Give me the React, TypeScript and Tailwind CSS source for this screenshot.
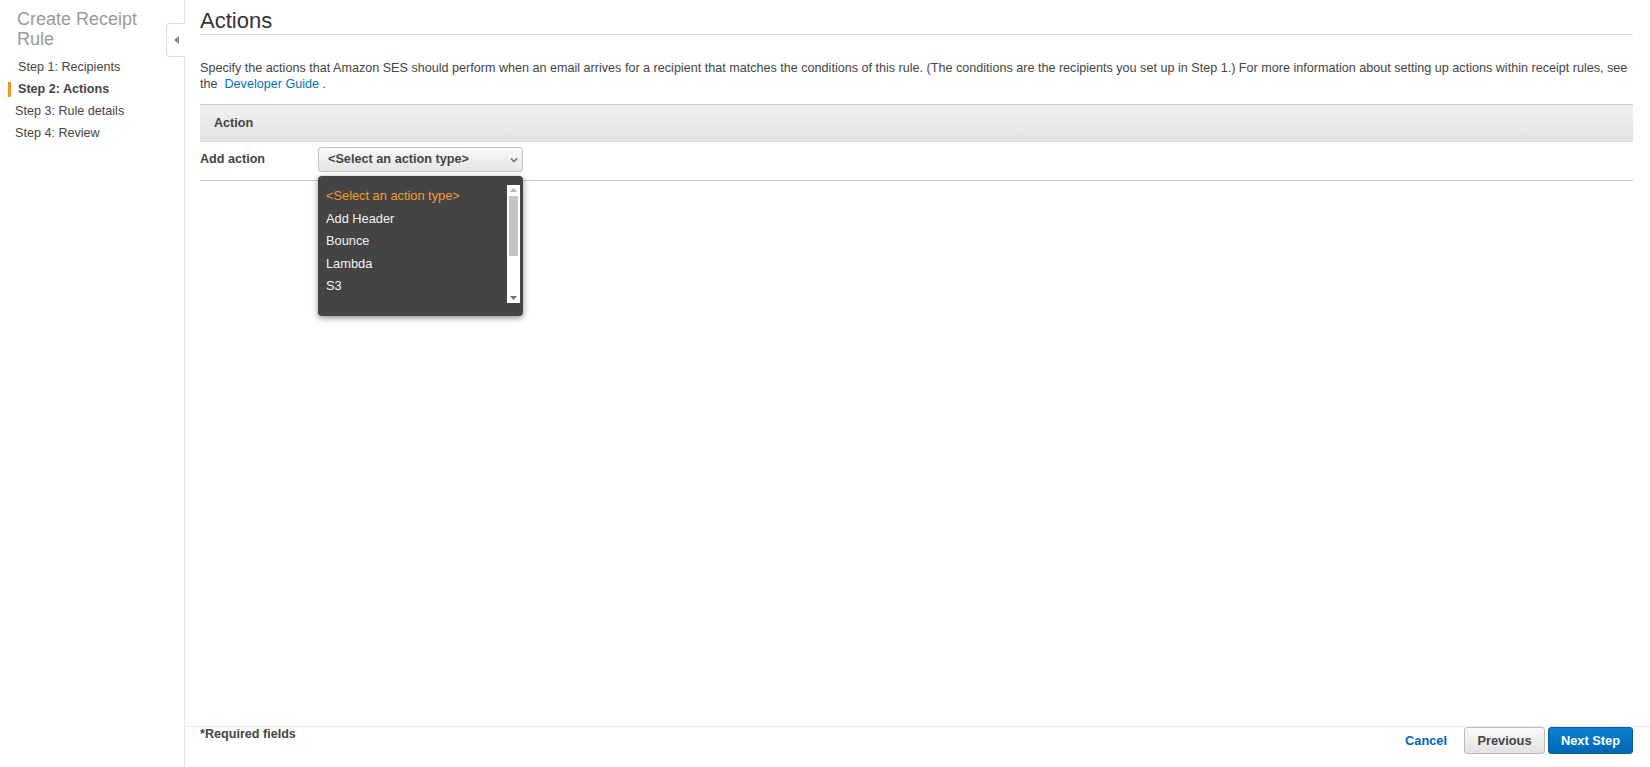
import React from "react";

const steps = [
  { label: "Step 1: Recipients", pad: "pl-[18px]" },
  { label: "Step 2: Actions", pad: "pl-[18px]", active: true },
  { label: "Step 3: Rule details", pad: "pl-[15px]" },
  { label: "Step 4: Review", pad: "pl-[15px]" },
];

const options = ["<Select an action type>", "Add Header", "Bounce", "Lambda", "S3"];

function Sidebar() {
  return (
    <div className="relative w-[185px] shrink-0 border-r border-[#e8e8e8] bg-white">
      <div className="pl-[17px] pt-[9px] text-[18px] leading-[20px] text-[#9a9a9a]">
        Create Receipt
        <br />
        Rule
      </div>
      <ul className="mt-[7px] text-[12.6px] text-[#444]">
        {steps.map((s) => (
          <li key={s.label} className={`relative h-[22px] leading-[22px] ${s.pad} ${s.active ? "font-bold" : ""}`}>
            {s.active && <span className="absolute left-[8px] top-[4px] h-[15px] w-[3px] bg-[#f7931e]" />}
            {s.label}
          </li>
        ))}
      </ul>
      {/* collapse tab sitting over the border */}
      <button className="absolute right-[-1px] top-[23px] flex h-[34px] w-[19px] items-center justify-center rounded-l-[4px] border border-r-0 border-[#dcdcdc] bg-white">
        <svg width="5" height="8" viewBox="0 0 5 8">
          <path d="M5 0 L0 4 L5 8 Z" fill="#888" />
        </svg>
      </button>
    </div>
  );
}

function ActionDropdown() {
  return (
    <div className="absolute left-0 top-[29px] z-10 flex h-[140px] w-[205px] rounded-[4px] bg-[#444] shadow-[0_2px_6px_rgba(0,0,0,0.45)]">
      <ul className="flex-1 pl-[8px] pt-[9px] text-[12.8px] font-normal">
        {options.map((o, i) => (
          <li key={o} className={`leading-[22.5px] ${i === 0 ? "text-[#f39a2e]" : "text-[#f2f2f2]"}`}>
            {o}
          </li>
        ))}
      </ul>
      <div className="mb-[13px] mr-[3px] mt-[9px] flex w-[13px] flex-col items-center bg-white">
        <svg width="7" height="6" viewBox="0 0 7 6" className="mt-[2px]">
          <path d="M0 5 L3.5 1 L7 5 Z" fill="#b5b5b5" />
        </svg>
        <div className="mt-[3px] h-[60px] w-[9px] bg-[#c4c4c4]" />
        <div className="flex-1" />
        <svg width="7" height="6" viewBox="0 0 7 6" className="mb-[2px]">
          <path d="M0 1 L3.5 5 L7 1 Z" fill="#6f6f6f" />
        </svg>
      </div>
    </div>
  );
}

export default function App() {
  return (
    <div className="flex h-[767px] w-full bg-white font-['Liberation_Sans',Arial,sans-serif] text-[#444]">
      <Sidebar />
      <div className="flex min-w-0 flex-1 flex-col pl-[15px] pr-[17px]">
        <h1 className="mt-[8px] border-b border-[#dddddd] text-[22px] leading-[26px] text-[#333]">Actions</h1>
        <p className="mt-[25px] text-[12.6px] leading-[16px] text-[#444]">
          Specify the actions that Amazon SES should perform when an email arrives for a recipient that matches the conditions of this rule.
          (The conditions are the recipients you set up in Step 1.) For more information about setting up actions within receipt rules, see
          the <a className="text-[#0073bb]">&nbsp;Developer Guide</a> .
        </p>

        <div className="mt-[12px] flex h-[38px] items-center border-t border-b border-t-[#c8c8c8] border-b-[#dedede] bg-gradient-to-b from-[#f1f1f1] to-[#e3e3e3] pl-[14px] text-[12.6px] font-bold text-[#444]">
          Action
        </div>

        <div className="flex items-center border-b border-[#c9c9c9] pb-[8px] pt-[5px]">
          <span className="w-[118px] text-[12.6px] font-bold text-[#444]">Add action</span>
          <div className="relative">
            <div className="flex h-[25px] w-[205px] items-center justify-between rounded-[3px] border border-[#c3c3c3] bg-gradient-to-b from-[#fafafa] to-[#e4e4e4] pl-[9px] pr-[4px] text-[12.7px] font-bold text-[#444]">
              <span>&lt;Select an action type&gt;</span>
              <svg width="8" height="6" viewBox="0 0 8 6">
                <path d="M1 1.5 L4 4.5 L7 1.5" fill="none" stroke="#777" strokeWidth="1.6" />
              </svg>
            </div>
            <ActionDropdown />
          </div>
        </div>

        <div className="flex-1" />

        <div className="-ml-[15px] -mr-[17px] flex items-start border-t border-[#ececec] pb-[13px] pl-[15px] pr-[17px]">
          <span className="mt-[-1px] text-[12.6px] font-bold leading-[16px] text-[#444]">*Required fields</span>
          <div className="ml-auto flex items-center">
            <a className="mr-[17px] text-[12.8px] font-bold text-[#0066b8]">Cancel</a>
            <button className="h-[27px] w-[81px] rounded-[3px] border border-[#bdbdbd] bg-gradient-to-b from-[#fafafa] to-[#e2e2e2] text-[12.8px] font-bold text-[#444]">
              Previous
            </button>
            <button className="ml-[3px] h-[27px] w-[85px] rounded-[3px] border border-[#0a5b98] bg-gradient-to-b from-[#0c7fd0] to-[#0067b5] text-[12.8px] font-bold text-white">
              Next Step
            </button>
          </div>
        </div>
      </div>
    </div>
  );
}
